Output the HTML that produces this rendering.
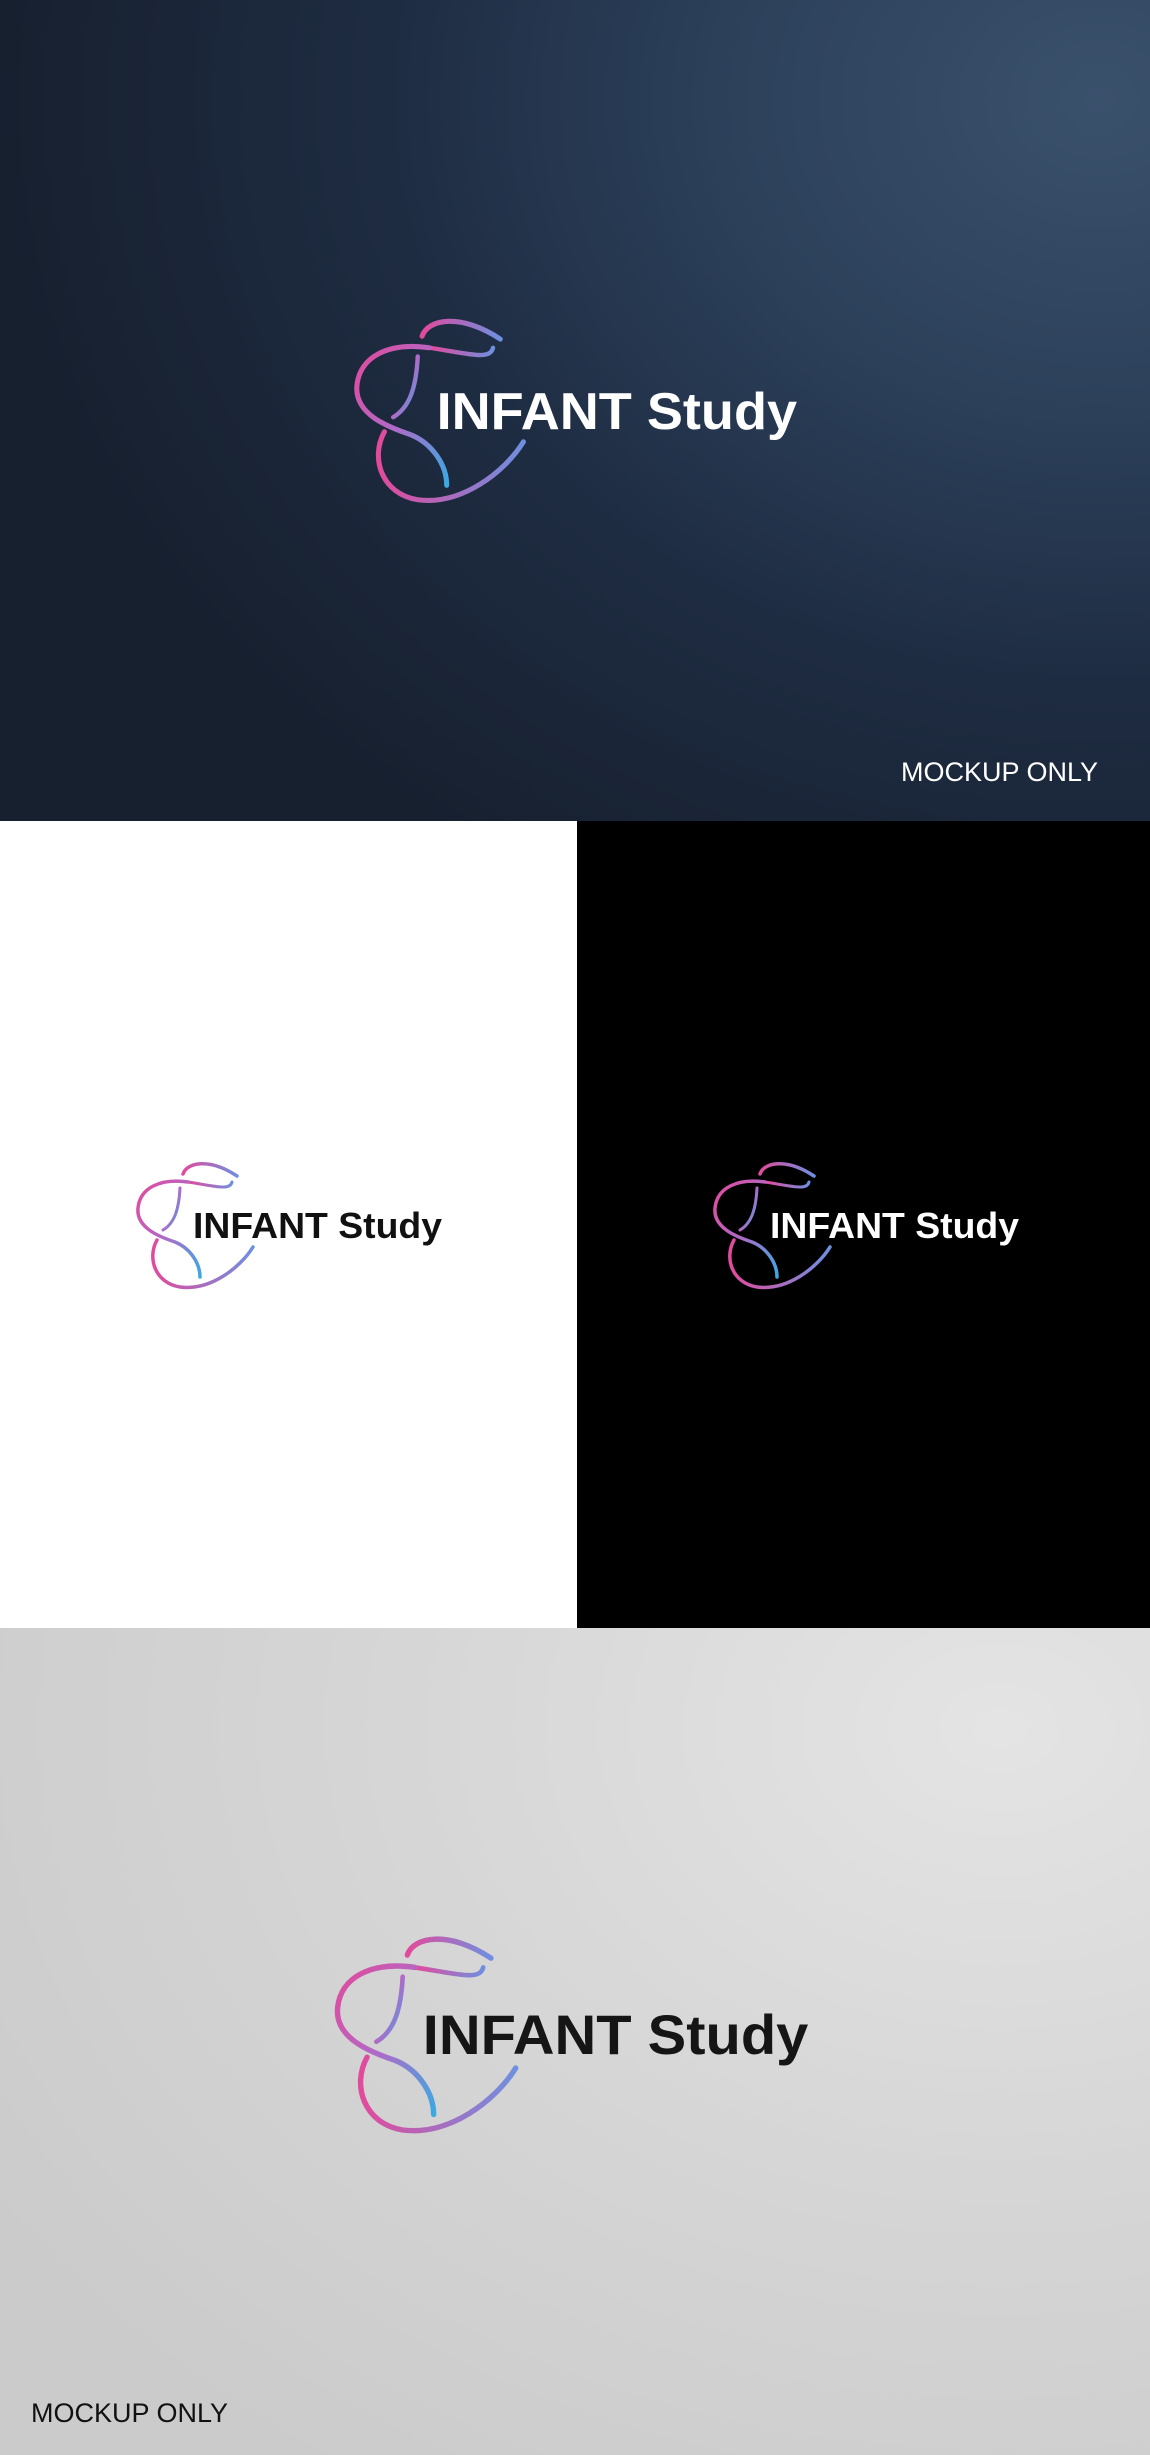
<!DOCTYPE html>
<html><head><meta charset="utf-8"><style>
html,body{margin:0;padding:0}
body{width:1150px;height:2455px;position:relative;overflow:hidden;font-family:"Liberation Sans",sans-serif}
.top{position:absolute;left:0;top:0;width:1150px;height:821px;background:radial-gradient(ellipse 1100px 900px at 1100px 100px,#435b76 0%,#34496300 0%,#3a516c 0%,#2c405a 35%,#1e2c42 65%,#17202f 100%)}
.wl{position:absolute;left:0;top:821px;width:577px;height:807px;background:#fff}
.bk{position:absolute;left:577px;top:821px;width:573px;height:807px;background:#000}
.bot{position:absolute;left:0;top:1628px;width:1150px;height:827px;background:radial-gradient(ellipse 1200px 900px at 1000px 100px,#e4e4e4 0%,#d6d6d6 50%,#cbcbcb 100%)}
.logo{position:absolute;overflow:visible}
.mk{position:absolute;font-size:27px}
</style></head><body>
<svg width="0" height="0" style="position:absolute">
<defs>
<linearGradient id="g" x1="0" y1="0" x2="1" y2="1"><stop offset="0" stop-color="#e24a9c"/><stop offset="0.5" stop-color="#b06ac8"/><stop offset="1" stop-color="#3ba9e2"/></linearGradient>
<linearGradient id="g2" x1="0" y1="0" x2="1" y2="0"><stop offset="0" stop-color="#e24a9c"/><stop offset="1" stop-color="#6f8fe0"/></linearGradient>
<g id="icon" fill="none" stroke-linecap="round">
<path d="M48,16 C52,4 75,0 102,18" stroke="url(#g2)" stroke-width="3.5"/>
<path d="M53,24 C80,28 95,33 97,24" stroke="url(#g2)" stroke-width="3"/>
<path d="M53,24 C25,20 5,30 3,50 C1,70 25,79 40,84 C55,90 65,105 65,119" stroke="url(#g)" stroke-width="3.5"/>
<path d="M45,30 C44,50 40,65 28,72" stroke="url(#g)" stroke-width="3"/>
<path d="M22,82 C12,100 20,125 45,129 C75,133 105,110 118,89" stroke="url(#g2)" stroke-width="3.5"/>
</g>
</defs></svg>

<div class="top"></div>
<svg class="logo" style="left:352px;top:313px" width="450" height="194" viewBox="0 0 310 134">
<use href="#icon"/>
<text x="58" y="80" font-family="Liberation Sans" font-weight="bold" font-size="36" fill="#fff" textLength="249" lengthAdjust="spacingAndGlyphs">INFANT Study</text>
</svg>
<div class="mk" style="left:901px;top:757px;color:#fff">MOCKUP ONLY</div>

<div class="wl"></div>
<div class="bk"></div>
<svg class="logo" style="left:135px;top:1158px" width="310" height="134" viewBox="0 0 310 134">
<use href="#icon"/>
<text x="58" y="80" font-family="Liberation Sans" font-weight="bold" font-size="36" fill="#111" textLength="249" lengthAdjust="spacingAndGlyphs">INFANT Study</text>
</svg>
<svg class="logo" style="left:712px;top:1158px" width="310" height="134" viewBox="0 0 310 134">
<use href="#icon"/>
<text x="58" y="80" font-family="Liberation Sans" font-weight="bold" font-size="36" fill="#fff" textLength="249" lengthAdjust="spacingAndGlyphs">INFANT Study</text>
</svg>

<div class="bot"></div>
<svg class="logo" style="left:333px;top:1930px" width="480" height="208" viewBox="0 0 310 134">
<use href="#icon"/>
<text x="58" y="80" font-family="Liberation Sans" font-weight="bold" font-size="36" fill="#151515" textLength="249" lengthAdjust="spacingAndGlyphs">INFANT Study</text>
</svg>
<div class="mk" style="left:31px;top:2398px;color:#111">MOCKUP ONLY</div>
</body></html>
